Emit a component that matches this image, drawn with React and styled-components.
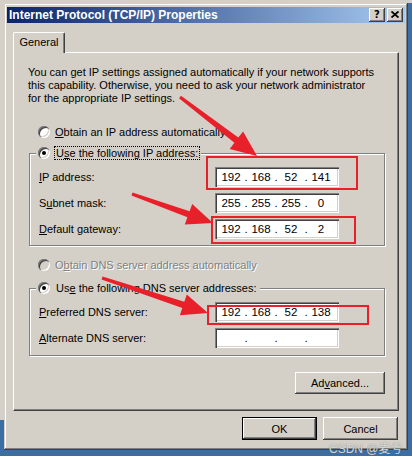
import React from 'react'
import styled, { createGlobalStyle } from 'styled-components'

const face = '#d4d0c8'
const shadow = '#808080'
const darkShadow = '#404040'
const red = '#e8202a'

const raised = `inset -1px -1px ${darkShadow}, inset 1px 1px #fff, inset -2px -2px ${shadow}, inset 2px 2px ${face}`
const sunken = `inset 1px 1px ${shadow}, inset 2px 2px ${darkShadow}, inset -1px -1px #fff, inset -2px -2px ${face}`

const GlobalStyle = createGlobalStyle`
  body {
    margin: 0;
    background: #3a6ea5;
  }
  * {
    box-sizing: border-box;
  }
`

const Screen = styled.div`
  position: relative;
  width: 412px;
  height: 456px;
  overflow: hidden;
  display: flex;
  align-items: flex-start;
  padding: 3px 0 0 4px;
  background:
    linear-gradient(${face}, ${face}) 0 0 / 4px 420px no-repeat,
    linear-gradient(${face}, ${face}) 0 0 / 100% 3px no-repeat,
    #3a6ea5;
  font-family: 'Liberation Sans', Arial, sans-serif;
  font-size: 11px;
  color: #000;
`

const Dialog = styled.div`
  width: 404px;
  height: 447px;
  padding: 4px 3px 3px 3px;
  background: ${face};
  box-shadow: inset -1px -1px ${darkShadow}, inset 1px 1px ${face},
    inset -2px -2px ${shadow}, inset 2px 2px #fff;
  display: flex;
  flex-direction: column;
`

const TitleBar = styled.div`
  height: 16px;
  display: flex;
  align-items: center;
  justify-content: space-between;
  padding: 0 2px 0 2px;
  background: linear-gradient(to right, #0a246a, #a6caf0);
  color: #fff;
  font-weight: bold;
  font-size: 12px;
`

const TitleButtons = styled.div`
  display: flex;
  gap: 2px;
`

const CaptionButton = styled.div`
  width: 16px;
  height: 14px;
  background: ${face};
  box-shadow: ${raised};
  display: flex;
  align-items: center;
  justify-content: center;
  color: #000;
  font-family: 'DejaVu Sans', sans-serif;
  font-weight: bold;
  font-size: 10px;
  padding-bottom: 1px;
`

const TabRow = styled.div`
  display: flex;
  padding: 9px 6px 0;
`

const Tab = styled.div`
  position: relative;
  z-index: 1;
  height: 21px;
  width: 52px;
  margin-bottom: -1px;
  display: flex;
  align-items: center;
  justify-content: center;
  padding-bottom: 2px;
  background: ${face};
  border-top: 1px solid #fff;
  border-left: 1px solid #fff;
  border-right: 1px solid ${darkShadow};
  border-radius: 2px 2px 0 0;
  box-shadow: inset -1px 0 ${shadow};
`

const Panel = styled.div`
  height: 359px;
  margin: 0 6px;
  padding: 13px 13px 0 14px;
  border: 1px solid;
  border-color: #fff ${darkShadow} ${darkShadow} #fff;
  box-shadow: inset -1px -1px ${shadow};
  display: flex;
  flex-direction: column;
`

const Intro = styled.p`
  margin: 0;
  line-height: 13px;
  white-space: nowrap;
`

const RadioRow = styled.div`
  display: flex;
  align-items: center;
  gap: 5px;
  height: 14px;
  margin: ${p => p.$top}px 0 0 10px;
  color: ${p => (p.$disabled ? shadow : '#000')};
  text-shadow: ${p => (p.$disabled ? '1px 1px #fff' : 'none')};
`

const Radio = styled.span`
  position: relative;
  width: 12px;
  height: 12px;
  flex: none;
  border-radius: 50%;
  background: ${p => (p.$disabled ? face : '#fff')};
  box-shadow: inset 1px 1px ${shadow}, inset 2px 2px ${darkShadow},
    inset -1px -1px #fff, inset -2px -2px ${face};
  &::after {
    content: '';
    display: ${p => (p.$checked ? 'block' : 'none')};
    position: absolute;
    left: 4px;
    top: 4px;
    width: 4px;
    height: 4px;
    border-radius: 50%;
    background: #000;
  }
`

const Group = styled.fieldset`
  margin: ${p => p.$top}px 0 0 1px;
  width: 356px;
  padding: 0;
  border: 1px solid ${shadow};
  box-shadow: inset 1px 1px #fff, 1px 1px #fff;
  min-inline-size: 0;
`

const Legend = styled.legend`
  display: flex;
  align-items: center;
  gap: 5px;
  height: 14px;
  margin-left: 6px;
  padding: 0 2px;
  background: ${face};
`

const FocusLabel = styled.span`
  padding: 0 1px;
  line-height: 12px;
  outline: ${p => (p.$focus ? '1px dotted #000' : 'none')};
`

const GroupBody = styled.div`
  display: flex;
  flex-direction: column;
  gap: 6px;
  padding: 7px 0 ${p => p.$bottom}px 9px;
`

const FieldRow = styled.div`
  display: grid;
  grid-template-columns: 176px 124px;
  align-items: center;
  height: 20px;
`

const Field = styled.div`
  height: 20px;
  display: flex;
  align-items: center;
  padding-left: 3px;
  background: #fff;
  box-shadow: ${sunken};
  font-size: 11.5px;
`

const Octet = styled.span`
  width: 26px;
  text-align: center;
`

const Dot = styled.span`
  width: 4px;
  text-align: center;
`

const ButtonRow = styled.div`
  display: flex;
  justify-content: flex-end;
  gap: 6px;
  margin-top: ${p => p.$top}px;
  padding-right: ${p => p.$right}px;
`

const Button = styled.div`
  width: ${p => p.$width || 75}px;
  height: ${p => p.$height || 23}px;
  display: flex;
  align-items: center;
  justify-content: center;
  background: ${face};
  border: ${p => (p.$default ? '1px solid #000' : 'none')};
  box-shadow: ${raised};
`

const Watermark = styled.span`
  position: absolute;
  left: 329px;
  top: 439px;
  font-family: 'Liberation Sans', 'Noto Sans CJK SC', sans-serif;
  font-size: 12px;
  color: rgba(255, 255, 255, 0.75);
  text-shadow: 0 0 1px #5a5a5a;
`

const Overlay = styled.svg`
  position: absolute;
  left: 0;
  top: 0;
  pointer-events: none;
`

const arrowPoints = (x1, y1, x2, y2) => {
  const len = Math.hypot(x2 - x1, y2 - y1)
  const dx = (x2 - x1) / len
  const dy = (y2 - y1) / len
  const px = -dy
  const py = dx
  const bx = x2 - dx * 26
  const by = y2 - dy * 26
  const pt = (x, y, w) => `${(x + px * w).toFixed(1)},${(y + py * w).toFixed(1)}`
  return [
    pt(x1, y1, 1.6),
    pt(bx, by, 3.2),
    pt(bx, by, 11),
    `${x2},${y2}`,
    pt(bx, by, -11),
    pt(bx, by, -3.2),
    pt(x1, y1, -1.6)
  ].join(' ')
}

const arrows = [
  [180, 97, 257, 156],
  [132, 194, 213, 223],
  [102, 278, 208, 313]
]

const boxes = [
  [207, 157, 150, 32],
  [212, 217, 143, 26],
  [208, 306, 160, 18]
]

const IpField = ({ parts }) => (
  <Field>
    {parts.map((part, i) => (
      <React.Fragment key={i}>
        {i > 0 && <Dot>.</Dot>}
        <Octet>{part}</Octet>
      </React.Fragment>
    ))}
  </Field>
)

const ipRows = [
  { label: <><u>I</u>P address:</>, parts: ['192', '168', '52', '141'] },
  { label: <>S<u>u</u>bnet mask:</>, parts: ['255', '255', '255', '0'] },
  { label: <><u>D</u>efault gateway:</>, parts: ['192', '168', '52', '2'] }
]

const dnsRows = [
  { label: <><u>P</u>referred DNS server:</>, parts: ['192', '168', '52', '138'] },
  { label: <><u>A</u>lternate DNS server:</>, parts: ['', '', '', ''] }
]

export default function App() {
  return (
    <Screen>
      <GlobalStyle />
      <Dialog>
        <TitleBar>
          <span>Internet Protocol (TCP/IP) Properties</span>
          <TitleButtons>
            <CaptionButton>?</CaptionButton>
            <CaptionButton>
              <svg width='8' height='7' viewBox='0 0 8 7'>
                <path d='M0.5 0.5 L7.5 6.5 M7.5 0.5 L0.5 6.5' stroke='#000' strokeWidth='1.8' />
              </svg>
            </CaptionButton>
          </TitleButtons>
        </TitleBar>

        <TabRow>
          <Tab>General</Tab>
        </TabRow>

        <Panel>
          <Intro>
            You can get IP settings assigned automatically if your network supports
            <br />
            this capability. Otherwise, you need to ask your network administrator
            <br />
            for the appropriate IP settings.
          </Intro>

          <RadioRow $top={20}>
            <Radio />
            <span><u>O</u>btain an IP address automatically</span>
          </RadioRow>

          <Group $top={7}>
            <Legend>
              <Radio $checked />
              <FocusLabel $focus>U<u>s</u>e the following IP address:</FocusLabel>
            </Legend>
            <GroupBody $bottom={6}>
              {ipRows.map((row, i) => (
                <FieldRow key={i}>
                  <span>{row.label}</span>
                  <IpField parts={row.parts} />
                </FieldRow>
              ))}
            </GroupBody>
          </Group>

          <RadioRow $top={12} $disabled>
            <Radio $disabled />
            <span>O<u>b</u>tain DNS server address automatically</span>
          </RadioRow>

          <Group $top={9}>
            <Legend>
              <Radio $checked />
              <FocusLabel>Us<u>e</u> the following DNS server addresses:</FocusLabel>
            </Legend>
            <GroupBody $bottom={7}>
              {dnsRows.map((row, i) => (
                <FieldRow key={i}>
                  <span>{row.label}</span>
                  <IpField parts={row.parts} />
                </FieldRow>
              ))}
            </GroupBody>
          </Group>

          <ButtonRow $top={16} $right={0}>
            <Button $width={90} $height={22}>Ad<u>v</u>anced...</Button>
          </ButtonRow>
        </Panel>

        <ButtonRow $top={6} $right={7}>
          <Button $default>OK</Button>
          <Button>Cancel</Button>
        </ButtonRow>
      </Dialog>

      <Watermark>CSDN @麦兮</Watermark>

      <Overlay width='412' height='456'>
        {boxes.map(([x, y, w, h], i) => (
          <rect key={i} x={x} y={y} width={w} height={h} fill='none' stroke={red} strokeWidth='2' />
        ))}
        {arrows.map((a, i) => (
          <polygon key={i} points={arrowPoints(...a)} fill={red} />
        ))}
      </Overlay>
    </Screen>
  )
}
